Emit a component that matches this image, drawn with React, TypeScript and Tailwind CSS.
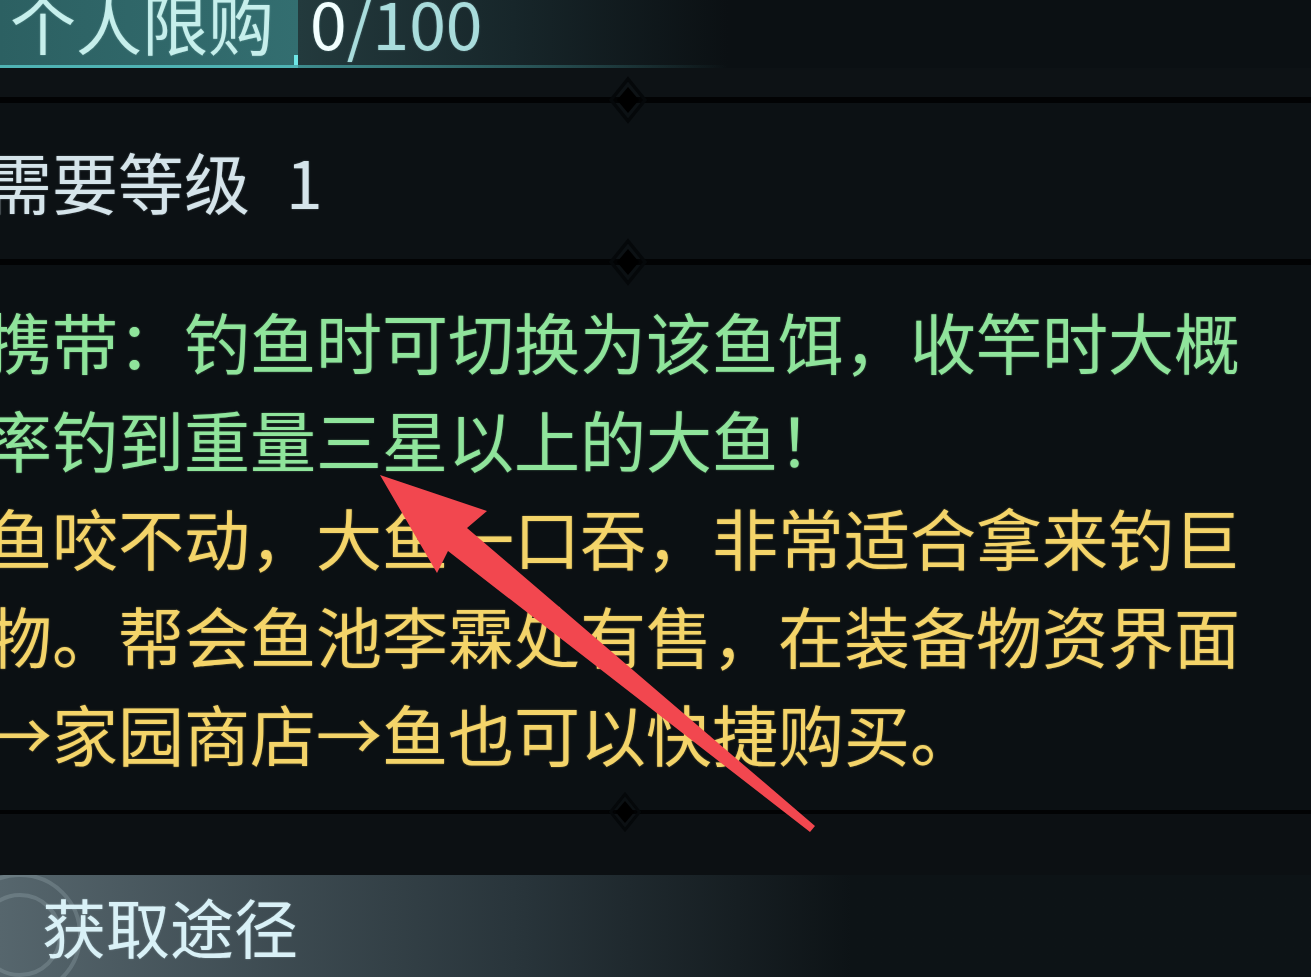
const Diamond = ({ size = 40 }: { size?: number }) => (
  <svg
    width={size}
    height={size * 1.2}
    viewBox="0 0 40 48"
    className="absolute left-[608px] top-1/2 -translate-y-1/2"
  >
    <path d="M20 3 L37 24 L20 45 L3 24 Z" fill="none" stroke="#05080a" strokeWidth="3.5" />
    <path d="M20 11 L31 24 L20 37 L9 24 Z" fill="#000" />
  </svg>
);

const Separator = ({ thin = false }: { thin?: boolean }) => (
  <div className={`relative w-full bg-[#020304] ${thin ? "h-[4px]" : "h-[6px]"}`}>
    <Diamond size={thin ? 34 : 40} />
  </div>
);

export default function App() {
  return (
    <div className="relative h-[977px] w-[1311px] overflow-hidden bg-[#0b1013] font-['Noto_Sans_CJK_SC','Noto_Sans',sans-serif]">
      {/* 个人限购 */}
      <div className="flex h-[68px] bg-[#0b1013]">
        <div className="relative h-full w-[298px] overflow-hidden border-b-[3px] border-[#4fb3b4] bg-gradient-to-r from-[#2c6062] to-[#336e70]">
          <span className="-mt-[12px] block pl-[10px] text-[66px] leading-[66px] text-[#c6efec] [text-shadow:0_0_2px_rgba(198,239,236,0.4)]">
            个人限购
          </span>
          <div className="absolute bottom-0 right-0 h-[10px] w-[4px] bg-[#6fe6e6]" />
        </div>
        <div className="relative h-full w-[430px] bg-gradient-to-r from-[#233a3d] via-[#17262a] to-[#0b1013]">
          <span className="-mt-[12px] block pl-[12px] text-[66px] leading-[66px] text-[#a9dcdc] [text-shadow:0_0_2px_rgba(169,220,220,0.4)]">
            <span className="text-[#f2ffff]">0</span>/100
          </span>
          <div className="absolute bottom-0 left-0 h-[3px] w-full bg-gradient-to-r from-[#3e8c8e] to-transparent" />
        </div>
      </div>

      <div className="h-[29px] bg-[#0d1215]" />
      <Separator />

      {/* 需要等级 */}
      <div className="h-[156px] bg-[#0c1114] pt-[44px]">
        <p className="-ml-[14px] text-[66px] leading-[66px] text-[#d5e4ea] [text-shadow:0_0_2px_rgba(213,228,234,0.4)]">
          需要等级<span className="ml-[36px]">1</span>
        </p>
      </div>

      <Separator />

      {/* 描述 */}
      <div className="h-[545px] bg-[#0b1013] pt-[26px]">
        <p className="-ml-[14px] w-[1256px] text-[66px] leading-[98px]">
          <span className="text-[#8fe49b] [text-shadow:0_0_2px_rgba(143,228,155,0.5)]">
            携带：钓鱼时可切换为该鱼饵，收竿时大概率钓到重量三星以上的大鱼！
          </span>
          <br />
          <span className="text-[#f4d469] [text-shadow:0_0_2px_rgba(244,212,105,0.5)]">
            鱼咬不动，大鱼一口吞，非常适合拿来钓巨物。帮会鱼池李霖处有售，在装备物资界面→家园商店→鱼也可以快捷购买。
          </span>
        </p>
      </div>

      <Separator thin />
      <div className="h-[61px] bg-[#0c1013]" />

      {/* 获取途径 */}
      <div className="relative h-[102px] overflow-hidden bg-gradient-to-r from-[#56666d] via-[#28343a] via-40% to-[#0d1316] to-[65%] pt-[17px]">
        <svg width="140" height="140" viewBox="0 0 140 140" className="absolute -left-[50px] top-[-10px] opacity-25">
          <circle cx="70" cy="70" r="60" fill="none" stroke="#a9bcc2" strokeWidth="4" />
          <circle cx="70" cy="70" r="40" fill="none" stroke="#a9bcc2" strokeWidth="4" />
        </svg>
        <p className="relative pl-[42px] text-[64px] leading-[66px] text-[#d9f1f7] [text-shadow:0_0_2px_rgba(217,241,247,0.4)]">
          获取途径
        </p>
      </div>

      {/* 红色箭头 */}
      <svg width="1311" height="977" viewBox="0 0 1311 977" className="pointer-events-none absolute left-0 top-0">
        <polygon
          points="380,475 487,511 467,528 815,826 810,832 448,551 437,573"
          fill="#f2474f"
        />
      </svg>
    </div>
  );
}
